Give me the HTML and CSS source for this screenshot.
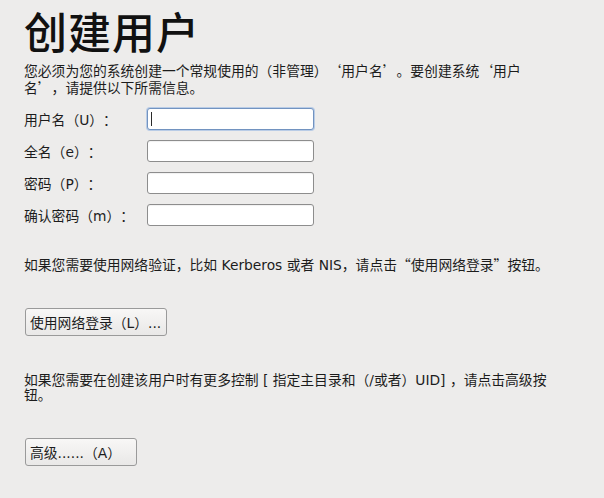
FILE: index.html
```html
<!DOCTYPE html>
<html lang="zh-CN">
<head>
<meta charset="utf-8">
<title>创建用户</title>
<link rel="stylesheet" href="styles.css">
</head>
<body>
<main class="page">
  <h1 class="title">创建用户</h1>
  <p class="intro">您必须为您的系统创建一个常规使用的（非管理）<span class="cjk">‘</span>用户名<span class="cjk">’</span>。要创建系统<span class="cjk">‘</span>用户名<span class="cjk">’</span>，请提供以下所需信息。</p>
  <form class="fields">
    <label class="row"><span class="label">用户名（U）：</span><span class="entry-wrap"><input class="entry focused" type="text"><span class="caret"></span></span></label>
    <label class="row"><span class="label">全名（e）：</span><input class="entry" type="text"></label>
    <label class="row"><span class="label">密码（P）：</span><input class="entry" type="password"></label>
    <label class="row"><span class="label">确认密码（m）：</span><input class="entry" type="password"></label>
  </form>
  <p class="note note-net">如果您需要使用网络验证，比如 Kerberos 或者 NIS，请点击<span class="cjk">“</span>使用网络登录<span class="cjk">”</span>按钮。</p>
  <button class="btn btn-net" type="button">使用网络登录（L）...</button>
  <p class="note note-adv">如果您需要在创建该用户时有更多控制 [ 指定主目录和（/或者）UID] ，请点击高级按钮。</p>
  <button class="btn btn-adv" type="button">高级......（A）</button>
</main>
</body>
</html>
```

FILE: styles.css
```css
html, body {
  margin: 0;
  padding: 0;
  background: #edeceb;
}
body {
  font-family: "DejaVu Sans", "Noto Sans CJK SC", sans-serif;
  font-size: 13.8px;
  color: #1c1c1c;
  text-spacing-trim: space-all;
}
.cjk {
  font-family: "Noto Sans CJK SC", sans-serif;
  font-feature-settings: "fwid" 1;
}
.page {
  display: flex;
  flex-direction: column;
  align-items: flex-start;
  padding: 0 0 0 24px;
}
.title {
  margin: 4px 0 0 0;
  font-family: "Noto Sans CJK SC", sans-serif;
  font-size: 43px;
  font-weight: 500;
  line-height: 52px;
  color: #111;
  letter-spacing: 1px;
}
.intro {
  margin: 6px 0 0 0;
  width: 510px;
  line-height: 16px;
}
.fields {
  display: flex;
  flex-direction: column;
  gap: 10px;
  margin-top: 12px;
}
.row {
  display: flex;
  align-items: center;
  height: 22px;
}
.label {
  width: 123px;
  flex: none;
}
.entry-wrap {
  position: relative;
  display: flex;
}
.caret {
  position: absolute;
  left: 4px;
  top: 4px;
  width: 1px;
  height: 14px;
  background: #2a2a2a;
}
.entry {
  box-sizing: border-box;
  width: 167px;
  height: 22px;
  margin: 0;
  padding: 0 4px;
  border: 1px solid #8d8d8d;
  border-radius: 3px;
  background: #fff;
  box-shadow: inset 0 1px 1px rgba(0,0,0,0.06);
  outline: none;
  font: inherit;
}
.entry.focused {
  border-color: #7293c0;
  box-shadow: 0 0 0 1px #b9cce6;
}
.note {
  margin: 0;
  line-height: 15px;
}
.note-net {
  margin-top: 31px;
  width: 570px;
}
.btn {
  box-sizing: border-box;
  height: 28px;
  margin: 0;
  padding: 0 4px 0 4px;
  border: 1px solid #9a9a9a;
  border-radius: 3px;
  background: linear-gradient(#f8f7f6, #e9e8e7);
  font: inherit;
  color: #1c1c1c;
  text-align: left;
  white-space: nowrap;
}
.btn-net {
  margin-top: 35px;
  width: 142px;
  margin-left: 1px;
}
.note-adv {
  margin-top: 37px;
  width: 535px;
}
.btn-adv {
  margin-top: 35px;
  width: 112px;
  margin-left: 1px;
}
```
